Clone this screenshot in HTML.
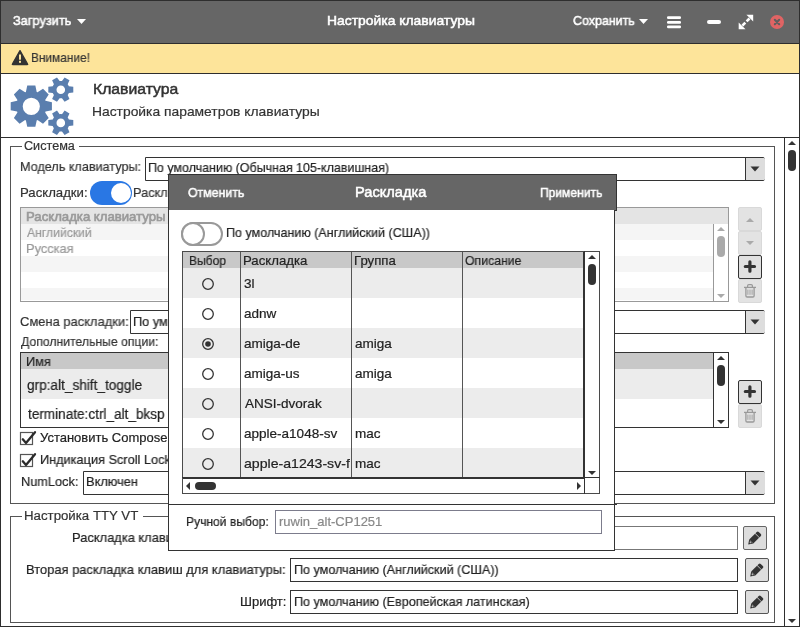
<!DOCTYPE html>
<html><head><meta charset="utf-8"><style>
html,body{margin:0;padding:0;}
body{width:800px;height:627px;position:relative;overflow:hidden;background:#fff;font-family:'Liberation Sans', sans-serif;}
body div, body span{position:absolute;}
body span{will-change:transform;}
</style></head><body>
<div style="left:0px;top:0px;width:800px;height:627px;background:#fff"></div>
<div style="left:0px;top:0px;width:800px;height:44px;background:#666"></div>
<div style="left:0px;top:43px;width:800px;height:1px;background:#2e2e2e"></div>
<div style="left:0px;top:44px;width:800px;height:29px;background:#fde49a"></div>
<div style="left:0px;top:73px;width:800px;height:1px;background:#2e2e2e"></div>
<div style="left:0px;top:137px;width:800px;height:1px;background:#2e2e2e"></div>
<div style="left:0px;top:0px;width:1px;height:627px;background:#2e2e2e"></div>
<div style="left:799px;top:0px;width:1px;height:627px;background:#2e2e2e"></div>
<div style="left:0px;top:0px;width:800px;height:1px;background:#2e2e2e"></div>
<div style="left:0px;top:626px;width:800px;height:1px;background:#2e2e2e"></div>
<span style="left:13.02px;top:14.22px;font-size:13px;line-height:13px;font-weight:normal;color:#fff;white-space:pre;-webkit-text-stroke:0.5px #fff;transform:scaleX(0.9828);transform-origin:0 0;">Загрузить</span>
<svg style="position:absolute;left:76px;top:18px" width="11" height="7" viewBox="0 0 11 7"><path d="M1,1 L10,1 L5.5,6 Z" fill="#fff"/></svg>
<span style="left:326.53px;top:14.12px;font-size:13px;line-height:13px;font-weight:normal;color:#fff;white-space:pre;-webkit-text-stroke:0.5px #fff;transform:scaleX(1.0686);transform-origin:0 0;">Настройка клавиатуры</span>
<span style="left:573.44px;top:14.32px;font-size:13px;line-height:13px;font-weight:normal;color:#fff;white-space:pre;-webkit-text-stroke:0.5px #fff;transform:scaleX(0.9571);transform-origin:0 0;">Сохранить</span>
<svg style="position:absolute;left:638px;top:18px" width="11" height="7" viewBox="0 0 11 7"><path d="M1,1 L10,1 L5.5,6 Z" fill="#fff"/></svg>
<svg style="position:absolute;left:664px;top:14px" width="20" height="17" viewBox="0 0 20 17"><rect x="3" y="2.2" width="14" height="2.8" rx="1.2" fill="#fff"/><rect x="3" y="7" width="14" height="2.8" rx="1.2" fill="#fff"/><rect x="3" y="11.4" width="14" height="2.8" rx="1.2" fill="#fff"/></svg>
<svg style="position:absolute;left:705px;top:18px" width="18" height="8" viewBox="0 0 18 8"><rect x="2" y="2" width="14" height="4" rx="2" fill="#fff"/></svg>
<svg style="position:absolute;left:736px;top:12px" width="20" height="20" viewBox="0 0 20 20"><path d="M17.2,2.8 L10.4,2.8 L17.2,9.6 Z" fill="#fff"/><path d="M2.7,17.2 L9.5,17.2 L2.7,10.4 Z" fill="#fff"/><line x1="13.5" y1="6.5" x2="10.6" y2="9.4" stroke="#fff" stroke-width="2.6"/><line x1="6.4" y1="13.6" x2="9.3" y2="10.7" stroke="#fff" stroke-width="2.6"/></svg>
<svg style="position:absolute;left:768px;top:13px" width="18" height="18" viewBox="0 0 18 18"><circle cx="9" cy="9" r="7" fill="#e06464"/><path d="M6.8,6.8 L11.2,11.2 M11.2,6.8 L6.8,11.2" stroke="#5e5e5e" stroke-width="2" stroke-linecap="round"/></svg>
<svg style="position:absolute;left:10px;top:48px" width="20" height="19" viewBox="0 0 20 19"><path d="M10,2.6 L17.6,16 Q18,16.6 17.2,16.6 L2.8,16.6 Q2,16.6 2.4,16 Z" fill="#333" stroke="#333" stroke-width="1.3" stroke-linejoin="round"/><rect x="9" y="6.5" width="2" height="5.2" fill="#fde49a"/><rect x="9" y="12.8" width="2" height="2" fill="#fde49a"/></svg>
<span style="left:31.09px;top:51.12px;font-size:13px;line-height:13px;font-weight:normal;color:#333;white-space:pre;-webkit-text-stroke:0.2px #333;transform:scaleX(0.9127);transform-origin:0 0;">Внимание!</span>
<svg style="position:absolute;left:0px;top:0px" width="100" height="140" viewBox="0 0 100 140"><path d="M25.90,91.99 L27.25,85.59 L35.35,85.59 L36.70,91.99 L36.91,92.07 L37.12,92.16 L37.32,92.24 L37.53,92.33 L43.01,88.77 L48.73,94.49 L45.17,99.97 L45.26,100.18 L45.34,100.38 L45.43,100.59 L45.51,100.80 L51.91,102.15 L51.91,110.25 L45.51,111.60 L45.43,111.81 L45.34,112.02 L45.26,112.22 L45.17,112.43 L48.73,117.91 L43.01,123.63 L37.53,120.07 L37.32,120.16 L37.12,120.24 L36.91,120.33 L36.70,120.41 L35.35,126.81 L27.25,126.81 L25.90,120.41 L25.69,120.33 L25.48,120.24 L25.28,120.16 L25.07,120.07 L19.59,123.63 L13.87,117.91 L17.43,112.43 L17.34,112.22 L17.26,112.02 L17.17,111.81 L17.09,111.60 L10.69,110.25 L10.69,102.15 L17.09,100.80 L17.17,100.59 L17.26,100.38 L17.34,100.18 L17.43,99.97 L13.87,94.49 L19.59,88.77 L25.07,92.33 L25.28,92.24 L25.48,92.16 L25.69,92.07ZM22.70,106.30 a8.6,8.6 0 1,0 17.2,0 a8.6,8.6 0 1,0 -17.2,0ZM68.85,86.30 L73.29,86.80 L73.29,92.40 L68.85,92.90 L68.61,93.43 L68.33,93.95 L68.02,94.45 L67.68,94.92 L69.47,99.02 L64.62,101.82 L61.97,98.22 L61.38,98.28 L60.80,98.30 L60.22,98.28 L59.63,98.22 L56.98,101.82 L52.13,99.02 L53.92,94.92 L53.58,94.45 L53.27,93.95 L52.99,93.43 L52.75,92.90 L48.31,92.40 L48.31,86.80 L52.75,86.30 L52.99,85.77 L53.27,85.25 L53.58,84.75 L53.92,84.28 L52.13,80.18 L56.98,77.38 L59.63,80.98 L60.22,80.92 L60.80,80.90 L61.38,80.92 L61.97,80.98 L64.62,77.38 L69.47,80.18 L67.68,84.28 L68.02,84.75 L68.33,85.25 L68.61,85.77ZM56.50,89.80 a4.3,4.3 0 1,0 8.6,0 a4.3,4.3 0 1,0 -8.6,0ZM68.85,119.50 L73.29,120.00 L73.29,125.60 L68.85,126.10 L68.61,126.63 L68.33,127.15 L68.02,127.65 L67.68,128.12 L69.47,132.22 L64.62,135.02 L61.97,131.42 L61.38,131.48 L60.80,131.50 L60.22,131.48 L59.63,131.42 L56.98,135.02 L52.13,132.22 L53.92,128.12 L53.58,127.65 L53.27,127.15 L52.99,126.63 L52.75,126.10 L48.31,125.60 L48.31,120.00 L52.75,119.50 L52.99,118.97 L53.27,118.45 L53.58,117.95 L53.92,117.48 L52.13,113.38 L56.98,110.58 L59.63,114.18 L60.22,114.12 L60.80,114.10 L61.38,114.12 L61.97,114.18 L64.62,110.58 L69.47,113.38 L67.68,117.48 L68.02,117.95 L68.33,118.45 L68.61,118.97ZM56.50,122.90 a4.3,4.3 0 1,0 8.6,0 a4.3,4.3 0 1,0 -8.6,0Z" fill="#5a7eae" fill-rule="evenodd"/></svg>
<span style="left:92.98px;top:81.12px;font-size:15.5px;line-height:15.5px;font-weight:normal;color:#333;white-space:pre;-webkit-text-stroke:0.5px #333;transform:scaleX(1.0157);transform-origin:0 0;">Клавиатура</span>
<span style="left:92.37px;top:105.34px;font-size:13.5px;line-height:13.5px;font-weight:normal;color:#333;white-space:pre;-webkit-text-stroke:0.2px #333;transform:scaleX(1.0255);transform-origin:0 0;">Настройка параметров клавиатуры</span>
<div style="left:784px;top:137px;width:1px;height:490px;background:#2e2e2e"></div>
<svg style="position:absolute;left:786px;top:139px" width="12" height="8" viewBox="0 0 12 8"><path d="M2,6 L10,6 L6,2 Z" fill="#333"/></svg>
<div style="left:788px;top:150px;width:8px;height:21px;background:#333;border-radius:4px"></div>
<svg style="position:absolute;left:786px;top:617px" width="12" height="8" viewBox="0 0 12 8"><path d="M2,2 L10,2 L6,6 Z" fill="#333"/></svg>
<div style="left:10px;top:146px;width:1px;height:358px;background:#555"></div>
<div style="left:774px;top:146px;width:1px;height:358px;background:#555"></div>
<div style="left:10px;top:503px;width:765px;height:1px;background:#555"></div>
<div style="left:10px;top:146px;width:12px;height:1px;background:#555"></div>
<div style="left:79px;top:146px;width:696px;height:1px;background:#555"></div>
<span style="left:24.49px;top:140.00px;font-size:12.5px;line-height:12.5px;font-weight:normal;color:#333;white-space:pre;-webkit-text-stroke:0.2px #333;transform:scaleX(1.0102);transform-origin:0 0;">Система</span>
<span style="left:19.63px;top:159.92px;font-size:13px;line-height:13px;font-weight:normal;color:#333;white-space:pre;-webkit-text-stroke:0.2px #333;transform:scaleX(0.9707);transform-origin:0 0;">Модель клавиатуры:</span>
<div style="left:145px;top:157px;width:620px;height:24px;box-sizing:border-box;border:1px solid #333;background:#fff;border-radius:0 2px 2px 0"></div>
<div style="left:745px;top:158px;width:19px;height:22px;background:#ddd;border-left:1px solid #333;border-radius:0 1px 1px 0"></div>
<svg style="position:absolute;left:749px;top:165px" width="12" height="8" viewBox="0 0 12 8"><path d="M1.5,1.5 L10.5,1.5 L6,6.5 Z" fill="#333"/></svg>
<span style="left:148.14px;top:161.42px;font-size:13px;line-height:13px;font-weight:normal;color:#222;white-space:pre;-webkit-text-stroke:0.2px #222;transform:scaleX(0.9580);transform-origin:0 0;">По умолчанию (Обычная 105-клавишная)</span>
<span style="left:19.59px;top:186.12px;font-size:13px;line-height:13px;font-weight:normal;color:#333;white-space:pre;-webkit-text-stroke:0.2px #333;transform:scaleX(1.0123);transform-origin:0 0;">Раскладки:</span>
<div style="left:90px;top:181px;width:42px;height:24px;background:#2977e4;border-radius:12px"></div>
<div style="left:110.5px;top:183px;width:20px;height:20px;background:#fff;border-radius:10px"></div>
<span style="left:133.42px;top:186.12px;font-size:13px;line-height:13px;font-weight:normal;color:#333;white-space:pre;-webkit-text-stroke:0.2px #333;transform:scaleX(0.9800);transform-origin:0 0;">Раскладки по умолчанию</span>
<div style="left:20px;top:207px;width:709px;height:95px;box-sizing:border-box;border:1px solid #999;background:#fff;"></div>
<div style="left:21px;top:208px;width:707px;height:16px;background:#e4e4e4"></div>
<div style="left:21px;top:224px;width:692px;height:16px;background:#f5f5f5"></div>
<div style="left:21px;top:256px;width:692px;height:16px;background:#f5f5f5"></div>
<div style="left:21px;top:288px;width:692px;height:12px;background:#f5f5f5"></div>
<span style="left:26.29px;top:210.12px;font-size:13px;line-height:13px;font-weight:normal;color:#999;white-space:pre;-webkit-text-stroke:0.6px #999;transform:scaleX(1.0125);transform-origin:0 0;">Раскладка клавиатуры</span>
<span style="left:27.30px;top:226.12px;font-size:13px;line-height:13px;font-weight:normal;color:#999;white-space:pre;-webkit-text-stroke:0.2px #999;transform:scaleX(0.9368);transform-origin:0 0;">Английский</span>
<span style="left:26.31px;top:242.12px;font-size:13px;line-height:13px;font-weight:normal;color:#999;white-space:pre;-webkit-text-stroke:0.2px #999;transform:scaleX(0.9851);transform-origin:0 0;">Русская</span>
<div style="left:713px;top:224px;width:1px;height:77px;background:#999"></div>
<div style="left:714px;top:224px;width:14px;height:77px;background:#fff"></div>
<svg style="position:absolute;left:714px;top:225px" width="14" height="8" viewBox="0 0 14 8"><path d="M3,6 L11,6 L7,2 Z" fill="#aaa"/></svg>
<div style="left:717px;top:236px;width:8px;height:21px;background:#aaa;border-radius:4px"></div>
<svg style="position:absolute;left:714px;top:292px" width="14" height="8" viewBox="0 0 14 8"><path d="M3,2 L11,2 L7,6 Z" fill="#aaa"/></svg>
<div style="left:738px;top:207px;width:24px;height:24px;box-sizing:border-box;border:1px solid #d9d9d9;background:#e3e3e3;border-radius:2px"></div>
<svg style="position:absolute;left:738px;top:207px" width="24" height="24" viewBox="0 0 24 24"><path d="M8,15 L16,15 L12,11 Z" fill="#aaa"/></svg>
<div style="left:738px;top:231px;width:24px;height:24px;box-sizing:border-box;border:1px solid #d9d9d9;background:#e3e3e3;border-radius:2px"></div>
<svg style="position:absolute;left:738px;top:231px" width="24" height="24" viewBox="0 0 24 24"><path d="M8,10 L16,10 L12,14 Z" fill="#aaa"/></svg>
<div style="left:738px;top:255px;width:24px;height:24px;box-sizing:border-box;border:1px solid #333;background:#e0e0e0;border-radius:2px"></div>
<svg style="position:absolute;left:738px;top:255px" width="24" height="24" viewBox="0 0 24 24"><path d="M7.3,11.5 L16.5,11.5 M11.9,6.8 L11.9,16.2" stroke="#333" stroke-width="3.2" stroke-linecap="round"/></svg>
<div style="left:738px;top:279px;width:24px;height:24px;box-sizing:border-box;border:1px solid #d9d9d9;background:#e3e3e3;border-radius:2px"></div>
<svg style="position:absolute;left:738px;top:279px" width="24" height="24" viewBox="0 0 24 24"><path d="M6,8.4 L18,8.4" stroke="#999" stroke-width="1.3"/><path d="M9.6,8.3 L9.6,6.8 Q9.6,5.6 10.8,5.6 L13.2,5.6 Q14.4,5.6 14.4,6.8 L14.4,8.3" fill="none" stroke="#999" stroke-width="1.2"/><path d="M7.9,8.6 L7.9,16.8 Q7.9,18 9.1,18 L14.9,18 Q16.1,18 16.1,16.8 L16.1,8.6" fill="none" stroke="#999" stroke-width="1.3"/><path d="M9.9,10.6 L9.9,15.8 M12,10.6 L12,15.8 M14.1,10.6 L14.1,15.8" stroke="#999" stroke-width="0.9"/></svg>
<span style="left:19.61px;top:315.42px;font-size:13px;line-height:13px;font-weight:normal;color:#333;white-space:pre;-webkit-text-stroke:0.2px #333;transform:scaleX(0.9944);transform-origin:0 0;">Смена раскладки:</span>
<div style="left:130px;top:310px;width:635px;height:24px;box-sizing:border-box;border:1px solid #333;background:#fff;border-radius:0 2px 2px 0"></div>
<div style="left:745px;top:311px;width:19px;height:22px;background:#ddd;border-left:1px solid #333;border-radius:0 1px 1px 0"></div>
<svg style="position:absolute;left:749px;top:318px" width="12" height="8" viewBox="0 0 12 8"><path d="M1.5,1.5 L10.5,1.5 L6,6.5 Z" fill="#333"/></svg>
<span style="left:133.22px;top:315.42px;font-size:13px;line-height:13px;font-weight:normal;color:#222;white-space:pre;-webkit-text-stroke:0.2px #222;transform:scaleX(0.9800);transform-origin:0 0;">По умолчанию</span>
<span style="left:20.60px;top:335.22px;font-size:13px;line-height:13px;font-weight:normal;color:#333;white-space:pre;-webkit-text-stroke:0.2px #333;transform:scaleX(0.9393);transform-origin:0 0;">Дополнительные опции:</span>
<div style="left:20px;top:352px;width:709px;height:76px;box-sizing:border-box;border:1px solid #333;background:#fff;"></div>
<div style="left:21px;top:353px;width:692px;height:16px;background:#c8c8c8"></div>
<div style="left:21px;top:369px;width:692px;height:30px;background:#ececec"></div>
<span style="left:26.32px;top:354.92px;font-size:13px;line-height:13px;font-weight:normal;color:#222;white-space:pre;-webkit-text-stroke:0.2px #222;transform:scaleX(0.9800);transform-origin:0 0;">Имя</span>
<span style="left:26.93px;top:377.86px;font-size:14px;line-height:14px;font-weight:normal;color:#222;white-space:pre;-webkit-text-stroke:0.2px #222;transform:scaleX(0.9735);transform-origin:0 0;">grp:alt_shift_toggle</span>
<span style="left:27.90px;top:406.96px;font-size:14px;line-height:14px;font-weight:normal;color:#222;white-space:pre;-webkit-text-stroke:0.2px #222;transform:scaleX(0.9700);transform-origin:0 0;">terminate:ctrl_alt_bksp</span>
<div style="left:713px;top:353px;width:1px;height:74px;background:#333"></div>
<svg style="position:absolute;left:714px;top:354px" width="14" height="8" viewBox="0 0 14 8"><path d="M3,6 L11,6 L7,2 Z" fill="#333"/></svg>
<div style="left:717px;top:365px;width:8px;height:21px;background:#333;border-radius:4px"></div>
<svg style="position:absolute;left:714px;top:418px" width="14" height="8" viewBox="0 0 14 8"><path d="M3,2 L11,2 L7,6 Z" fill="#333"/></svg>
<div style="left:738px;top:380px;width:24px;height:24px;box-sizing:border-box;border:1px solid #333;background:#e0e0e0;border-radius:2px"></div>
<svg style="position:absolute;left:738px;top:380px" width="24" height="24" viewBox="0 0 24 24"><path d="M7.3,11.5 L16.5,11.5 M11.9,6.8 L11.9,16.2" stroke="#333" stroke-width="3.2" stroke-linecap="round"/></svg>
<div style="left:738px;top:404px;width:24px;height:24px;box-sizing:border-box;border:1px solid #d9d9d9;background:#e3e3e3;border-radius:2px"></div>
<svg style="position:absolute;left:738px;top:404px" width="24" height="24" viewBox="0 0 24 24"><path d="M6,8.4 L18,8.4" stroke="#999" stroke-width="1.3"/><path d="M9.6,8.3 L9.6,6.8 Q9.6,5.6 10.8,5.6 L13.2,5.6 Q14.4,5.6 14.4,6.8 L14.4,8.3" fill="none" stroke="#999" stroke-width="1.2"/><path d="M7.9,8.6 L7.9,16.8 Q7.9,18 9.1,18 L14.9,18 Q16.1,18 16.1,16.8 L16.1,8.6" fill="none" stroke="#999" stroke-width="1.3"/><path d="M9.9,10.6 L9.9,15.8 M12,10.6 L12,15.8 M14.1,10.6 L14.1,15.8" stroke="#999" stroke-width="0.9"/></svg>
<svg style="position:absolute;left:19px;top:429px" width="19" height="18" viewBox="0 0 19 18"><rect x="1.5" y="3.5" width="12" height="12" fill="#fff" stroke="#555" stroke-width="1.2"/><path d="M3.8,10.3 L7,14 L16,3.2" fill="none" stroke="#2a2a2a" stroke-width="2.3" stroke-linejoin="round" stroke-linecap="round"/></svg>
<span style="left:39.60px;top:431.22px;font-size:13px;line-height:13px;font-weight:normal;color:#222;white-space:pre;-webkit-text-stroke:0.2px #222;">Установить Compose</span>
<svg style="position:absolute;left:19px;top:451px" width="19" height="18" viewBox="0 0 19 18"><rect x="1.5" y="3.5" width="12" height="12" fill="#fff" stroke="#555" stroke-width="1.2"/><path d="M3.8,10.3 L7,14 L16,3.2" fill="none" stroke="#2a2a2a" stroke-width="2.3" stroke-linejoin="round" stroke-linecap="round"/></svg>
<span style="left:39.62px;top:453.22px;font-size:13px;line-height:13px;font-weight:normal;color:#222;white-space:pre;-webkit-text-stroke:0.2px #222;transform:scaleX(0.9800);transform-origin:0 0;">Индикация Scroll Lock</span>
<span style="left:21.32px;top:475.42px;font-size:13px;line-height:13px;font-weight:normal;color:#222;white-space:pre;-webkit-text-stroke:0.2px #222;transform:scaleX(0.9789);transform-origin:0 0;">NumLock:</span>
<div style="left:83px;top:471px;width:682px;height:24px;box-sizing:border-box;border:1px solid #333;background:#fff;border-radius:0 2px 2px 0"></div>
<div style="left:745px;top:472px;width:19px;height:22px;background:#ddd;border-left:1px solid #333;border-radius:0 1px 1px 0"></div>
<svg style="position:absolute;left:749px;top:479px" width="12" height="8" viewBox="0 0 12 8"><path d="M1.5,1.5 L10.5,1.5 L6,6.5 Z" fill="#333"/></svg>
<span style="left:86.01px;top:475.42px;font-size:13px;line-height:13px;font-weight:normal;color:#222;white-space:pre;-webkit-text-stroke:0.2px #222;transform:scaleX(0.9863);transform-origin:0 0;">Включен</span>
<div style="left:10px;top:516px;width:1px;height:107px;background:#555"></div>
<div style="left:774px;top:516px;width:1px;height:107px;background:#555"></div>
<div style="left:10px;top:622px;width:765px;height:1px;background:#555"></div>
<div style="left:10px;top:516px;width:12px;height:1px;background:#555"></div>
<div style="left:143px;top:516px;width:632px;height:1px;background:#555"></div>
<span style="left:24.24px;top:510.00px;font-size:12.5px;line-height:12.5px;font-weight:normal;color:#333;white-space:pre;-webkit-text-stroke:0.2px #333;transform:scaleX(1.0598);transform-origin:0 0;">Настройка TTY VT</span>
<span style="left:71.61px;top:531.12px;font-size:13px;line-height:13px;font-weight:normal;color:#222;white-space:pre;-webkit-text-stroke:0.2px #222;transform:scaleX(0.9911);transform-origin:0 0;">Раскладка клавиш для клавиатуры:</span>
<div style="left:290px;top:526px;width:448px;height:24px;box-sizing:border-box;border:1px solid #777;background:#fff;"></div>
<div style="left:743px;top:526px;width:24px;height:24px;box-sizing:border-box;border:1px solid #666;background:#ddd;border-radius:2px"></div>
<svg style="position:absolute;left:743px;top:526px" width="24" height="24" viewBox="0 0 24 24"><g transform="translate(5.2,18.6) rotate(-45)"><path d="M0,0 L4.3,-2.9 L4.3,2.9 Z" fill="#333"/><circle cx="3.3" cy="0" r="0.95" fill="#b5b5b5"/><rect x="4.3" y="-2.9" width="8.2" height="5.8" fill="#333"/><path d="M13.1,-2.9 L15,-2.9 Q16.4,-2.9 16.4,-1.5 L16.4,1.5 Q16.4,2.9 15,2.9 L13.1,2.9 Z" fill="#333"/></g></svg>
<span style="left:26.41px;top:562.92px;font-size:13px;line-height:13px;font-weight:normal;color:#222;white-space:pre;-webkit-text-stroke:0.2px #222;transform:scaleX(0.9934);transform-origin:0 0;">Вторая раскладка клавиш для клавиатуры:</span>
<div style="left:290px;top:558px;width:448px;height:24px;box-sizing:border-box;border:1px solid #333;background:#fff;"></div>
<span style="left:293.78px;top:562.72px;font-size:13px;line-height:13px;font-weight:normal;color:#222;white-space:pre;-webkit-text-stroke:0.2px #222;transform:scaleX(0.9674);transform-origin:0 0;">По умолчанию (Английский (США))</span>
<div style="left:745px;top:558px;width:24px;height:24px;box-sizing:border-box;border:1px solid #555;background:#ddd;border-radius:2px"></div>
<svg style="position:absolute;left:745px;top:558px" width="24" height="24" viewBox="0 0 24 24"><g transform="translate(5.2,18.6) rotate(-45)"><path d="M0,0 L4.3,-2.9 L4.3,2.9 Z" fill="#333"/><circle cx="3.3" cy="0" r="0.95" fill="#b5b5b5"/><rect x="4.3" y="-2.9" width="8.2" height="5.8" fill="#333"/><path d="M13.1,-2.9 L15,-2.9 Q16.4,-2.9 16.4,-1.5 L16.4,1.5 Q16.4,2.9 15,2.9 L13.1,2.9 Z" fill="#333"/></g></svg>
<span style="left:239.70px;top:594.72px;font-size:13px;line-height:13px;font-weight:normal;color:#222;white-space:pre;-webkit-text-stroke:0.2px #222;">Шрифт:</span>
<div style="left:290px;top:590px;width:448px;height:24px;box-sizing:border-box;border:1px solid #333;background:#fff;"></div>
<span style="left:293.78px;top:594.62px;font-size:13px;line-height:13px;font-weight:normal;color:#222;white-space:pre;-webkit-text-stroke:0.2px #222;transform:scaleX(0.9667);transform-origin:0 0;">По умолчанию (Европейская латинская)</span>
<div style="left:745px;top:590px;width:24px;height:24px;box-sizing:border-box;border:1px solid #555;background:#ddd;border-radius:2px"></div>
<svg style="position:absolute;left:745px;top:590px" width="24" height="24" viewBox="0 0 24 24"><g transform="translate(5.2,18.6) rotate(-45)"><path d="M0,0 L4.3,-2.9 L4.3,2.9 Z" fill="#333"/><circle cx="3.3" cy="0" r="0.95" fill="#b5b5b5"/><rect x="4.3" y="-2.9" width="8.2" height="5.8" fill="#333"/><path d="M13.1,-2.9 L15,-2.9 Q16.4,-2.9 16.4,-1.5 L16.4,1.5 Q16.4,2.9 15,2.9 L13.1,2.9 Z" fill="#333"/></g></svg>
<div style="left:168px;top:174px;width:449px;height:37px;background:#666;box-sizing:border-box;border:1px solid #333"></div>
<div style="left:168px;top:210px;width:447px;height:341px;background:#fff;box-sizing:border-box;border:1px solid #333;border-top:none"></div>
<span style="left:187.65px;top:185.92px;font-size:13px;line-height:13px;font-weight:normal;color:#fff;white-space:pre;-webkit-text-stroke:0.5px #fff;transform:scaleX(0.9466);transform-origin:0 0;">Отменить</span>
<span style="left:354.71px;top:185.26px;font-size:14px;line-height:14px;font-weight:normal;color:#fff;white-space:pre;-webkit-text-stroke:0.5px #fff;transform:scaleX(1.0448);transform-origin:0 0;">Раскладка</span>
<span style="left:540.37px;top:185.92px;font-size:13px;line-height:13px;font-weight:normal;color:#fff;white-space:pre;-webkit-text-stroke:0.5px #fff;transform:scaleX(0.9273);transform-origin:0 0;">Применить</span>
<div style="left:181px;top:222px;width:42px;height:24px;box-sizing:border-box;border:2px solid #999;border-radius:12px;background:#fff"></div>
<div style="left:181px;top:222px;width:24px;height:24px;box-sizing:border-box;border:2px solid #999;border-radius:12px;background:#fff"></div>
<span style="left:226.24px;top:226.22px;font-size:13px;line-height:13px;font-weight:normal;color:#222;white-space:pre;-webkit-text-stroke:0.2px #222;transform:scaleX(0.9638);transform-origin:0 0;">По умолчанию (Английский (США))</span>
<div style="left:182px;top:251px;width:418px;height:243px;box-sizing:border-box;border:1px solid #4a4a4a;background:#fff;"></div>
<div style="left:183px;top:252px;width:401px;height:16px;background:#c8c8c8"></div>
<div style="left:183px;top:268px;width:401px;height:30px;background:#ececec"></div>
<div style="left:183px;top:328px;width:401px;height:30px;background:#ececec"></div>
<div style="left:183px;top:388px;width:401px;height:30px;background:#ececec"></div>
<div style="left:183px;top:448px;width:401px;height:29px;background:#ececec"></div>
<div style="left:240px;top:252px;width:1px;height:226px;background:#555"></div>
<div style="left:351px;top:252px;width:1px;height:226px;background:#555"></div>
<div style="left:462px;top:252px;width:1px;height:226px;background:#555"></div>
<span style="left:188.97px;top:253.82px;font-size:13px;line-height:13px;font-weight:normal;color:#222;white-space:pre;-webkit-text-stroke:0.2px #222;transform:scaleX(0.9256);transform-origin:0 0;">Выбор</span>
<span style="left:243.38px;top:253.82px;font-size:13px;line-height:13px;font-weight:normal;color:#222;white-space:pre;-webkit-text-stroke:0.2px #222;transform:scaleX(1.0159);transform-origin:0 0;">Раскладка</span>
<span style="left:353.88px;top:253.82px;font-size:13px;line-height:13px;font-weight:normal;color:#222;white-space:pre;-webkit-text-stroke:0.2px #222;transform:scaleX(1.0150);transform-origin:0 0;">Группа</span>
<span style="left:465.36px;top:253.82px;font-size:13px;line-height:13px;font-weight:normal;color:#222;white-space:pre;-webkit-text-stroke:0.2px #222;transform:scaleX(0.9431);transform-origin:0 0;">Описание</span>
<svg style="position:absolute;left:201px;top:277px" width="14" height="14" viewBox="0 0 14 14"><circle cx="7" cy="7" r="5.3" fill="none" stroke="#333" stroke-width="1.3"/></svg>
<div style="left:241px;top:268px;width:109px;height:30px;overflow:hidden"><div style="left:-241px;top:-268px;width:800px;height:627px"><span style="left:243.56px;top:276.92px;font-size:13px;line-height:13px;font-weight:normal;color:#222;white-space:pre;-webkit-text-stroke:0.2px #222;transform:scaleX(1.0400);transform-origin:0 0;">3l</span></div></div>
<svg style="position:absolute;left:201px;top:307px" width="14" height="14" viewBox="0 0 14 14"><circle cx="7" cy="7" r="5.3" fill="none" stroke="#333" stroke-width="1.3"/></svg>
<div style="left:241px;top:298px;width:109px;height:30px;overflow:hidden"><div style="left:-241px;top:-298px;width:800px;height:627px"><span style="left:243.56px;top:306.92px;font-size:13px;line-height:13px;font-weight:normal;color:#222;white-space:pre;-webkit-text-stroke:0.2px #222;transform:scaleX(1.0400);transform-origin:0 0;">adnw</span></div></div>
<svg style="position:absolute;left:201px;top:337px" width="14" height="14" viewBox="0 0 14 14"><circle cx="7" cy="7" r="5.3" fill="none" stroke="#333" stroke-width="1.3"/><circle cx="7" cy="7" r="2.8" fill="#333"/></svg>
<div style="left:241px;top:328px;width:109px;height:30px;overflow:hidden"><div style="left:-241px;top:-328px;width:800px;height:627px"><span style="left:243.56px;top:336.92px;font-size:13px;line-height:13px;font-weight:normal;color:#222;white-space:pre;-webkit-text-stroke:0.2px #222;transform:scaleX(1.0400);transform-origin:0 0;">amiga-de</span></div></div>
<span style="left:355.16px;top:336.92px;font-size:13px;line-height:13px;font-weight:normal;color:#222;white-space:pre;-webkit-text-stroke:0.2px #222;transform:scaleX(1.0400);transform-origin:0 0;">amiga</span>
<svg style="position:absolute;left:201px;top:367px" width="14" height="14" viewBox="0 0 14 14"><circle cx="7" cy="7" r="5.3" fill="none" stroke="#333" stroke-width="1.3"/></svg>
<div style="left:241px;top:358px;width:109px;height:30px;overflow:hidden"><div style="left:-241px;top:-358px;width:800px;height:627px"><span style="left:243.56px;top:366.92px;font-size:13px;line-height:13px;font-weight:normal;color:#222;white-space:pre;-webkit-text-stroke:0.2px #222;transform:scaleX(1.0400);transform-origin:0 0;">amiga-us</span></div></div>
<span style="left:355.16px;top:366.92px;font-size:13px;line-height:13px;font-weight:normal;color:#222;white-space:pre;-webkit-text-stroke:0.2px #222;transform:scaleX(1.0400);transform-origin:0 0;">amiga</span>
<svg style="position:absolute;left:201px;top:397px" width="14" height="14" viewBox="0 0 14 14"><circle cx="7" cy="7" r="5.3" fill="none" stroke="#333" stroke-width="1.3"/></svg>
<div style="left:241px;top:388px;width:109px;height:30px;overflow:hidden"><div style="left:-241px;top:-388px;width:800px;height:627px"><span style="left:244.60px;top:396.92px;font-size:13px;line-height:13px;font-weight:normal;color:#222;white-space:pre;-webkit-text-stroke:0.2px #222;transform:scaleX(1.0400);transform-origin:0 0;">ANSI-dvorak</span></div></div>
<svg style="position:absolute;left:201px;top:427px" width="14" height="14" viewBox="0 0 14 14"><circle cx="7" cy="7" r="5.3" fill="none" stroke="#333" stroke-width="1.3"/></svg>
<div style="left:241px;top:418px;width:109px;height:30px;overflow:hidden"><div style="left:-241px;top:-418px;width:800px;height:627px"><span style="left:243.56px;top:426.92px;font-size:13px;line-height:13px;font-weight:normal;color:#222;white-space:pre;-webkit-text-stroke:0.2px #222;transform:scaleX(1.0400);transform-origin:0 0;">apple-a1048-sv</span></div></div>
<span style="left:355.16px;top:426.92px;font-size:13px;line-height:13px;font-weight:normal;color:#222;white-space:pre;-webkit-text-stroke:0.2px #222;transform:scaleX(1.0400);transform-origin:0 0;">mac</span>
<svg style="position:absolute;left:201px;top:457px" width="14" height="14" viewBox="0 0 14 14"><circle cx="7" cy="7" r="5.3" fill="none" stroke="#333" stroke-width="1.3"/></svg>
<div style="left:241px;top:448px;width:109px;height:30px;overflow:hidden"><div style="left:-241px;top:-448px;width:800px;height:627px"><span style="left:243.52px;top:456.92px;font-size:13px;line-height:13px;font-weight:normal;color:#222;white-space:pre;-webkit-text-stroke:0.2px #222;transform:scaleX(1.0848);transform-origin:0 0;">apple-a1243-sv-fi</span></div></div>
<span style="left:355.16px;top:456.92px;font-size:13px;line-height:13px;font-weight:normal;color:#222;white-space:pre;-webkit-text-stroke:0.2px #222;transform:scaleX(1.0400);transform-origin:0 0;">mac</span>
<div style="left:584px;top:251px;width:1px;height:243px;background:#333"></div>
<div style="left:585px;top:252px;width:14px;height:225px;background:#fff"></div>
<div style="left:583px;top:252px;width:1px;height:226px;background:#333"></div>
<svg style="position:absolute;left:585px;top:253px" width="14" height="8" viewBox="0 0 14 8"><path d="M3,6 L11,6 L7,2 Z" fill="#333"/></svg>
<div style="left:588px;top:264px;width:8px;height:21px;background:#333;border-radius:4px"></div>
<svg style="position:absolute;left:585px;top:469px" width="14" height="8" viewBox="0 0 14 8"><path d="M3,2 L11,2 L7,6 Z" fill="#333"/></svg>
<div style="left:182px;top:477px;width:418px;height:1px;background:#333"></div>
<div style="left:183px;top:478px;width:401px;height:1px;background:#333"></div>
<div style="left:183px;top:479px;width:400px;height:14px;background:#fff"></div>
<div style="left:585px;top:479px;width:14px;height:14px;background:#fff"></div>
<svg style="position:absolute;left:184px;top:480px" width="8" height="12" viewBox="0 0 8 12"><path d="M6,2 L6,10 L2,6 Z" fill="#333"/></svg>
<div style="left:195px;top:482px;width:21px;height:8px;background:#333;border-radius:4px"></div>
<svg style="position:absolute;left:574.5px;top:480px" width="8" height="12" viewBox="0 0 8 12"><path d="M2,2 L2,10 L6,6 Z" fill="#333"/></svg>
<div style="left:168px;top:504px;width:449px;height:1px;background:#333"></div>
<span style="left:185.67px;top:514.62px;font-size:13px;line-height:13px;font-weight:normal;color:#222;white-space:pre;-webkit-text-stroke:0.2px #222;transform:scaleX(0.9287);transform-origin:0 0;">Ручной выбор:</span>
<div style="left:275px;top:510px;width:327px;height:24px;box-sizing:border-box;border:1px solid #7c7c8c;background:#fff;"></div>
<span style="left:279.40px;top:514.82px;font-size:13px;line-height:13px;font-weight:normal;color:#888;white-space:pre;-webkit-text-stroke:0.2px #888;">ruwin_alt-CP1251</span>
</body></html>
